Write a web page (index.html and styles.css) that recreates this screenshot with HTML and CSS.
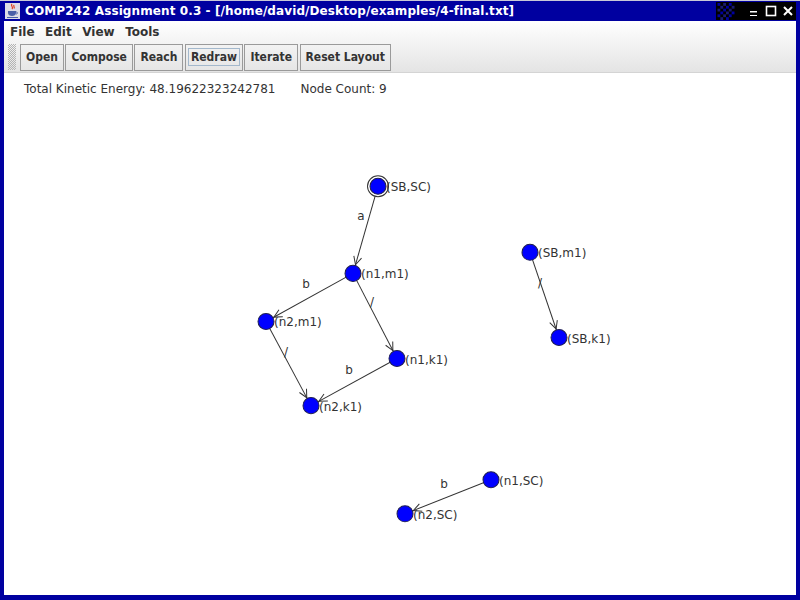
FILE: index.html
```html
<!DOCTYPE html>
<html>
<head>
<meta charset="utf-8">
<title>COMP242 Assignment 0.3</title>
<link rel="stylesheet" href="styles.css">
</head>
<body>
<div class="window">
  <div class="titlebar">
    <svg class="app-icon" width="15" height="16" viewBox="0 0 15 16">
      <rect x="0" y="0" width="15" height="16" fill="#dcdce6"/>
      <path d="M7 1 C5 3 9 4 7 6 M9 2 C8 3.5 10 4 9 5.5" stroke="#e03a1c" stroke-width="1.2" fill="none"/>
      <path d="M3 8 H11 V10 C11 12 9 13 7 13 C5 13 3 12 3 10 Z" fill="#4a5fa8"/>
      <path d="M11 9 C13 9 13 11 11 11" stroke="#4a5fa8" stroke-width="1" fill="none"/>
      <rect x="2" y="14" width="11" height="1" fill="#4a5fa8"/>
    </svg>
    <span class="title">COMP242 Assignment 0.3 - [/home/david/Desktop/examples/4-final.txt]</span>
    <div class="wm-buttons">
      <svg class="wm-pager" width="18" height="17" viewBox="0 0 6 6">
        <rect x="0" y="0" width="1" height="1" fill="#0000a0"/>
        <rect x="2" y="0" width="1" height="1" fill="#1a1a70"/>
        <rect x="4" y="0" width="1" height="1" fill="#0000a0"/>
        <rect x="1" y="1" width="1" height="1" fill="#1a1a70"/>
        <rect x="3" y="1" width="1" height="1" fill="#0000a0"/>
        <rect x="5" y="1" width="1" height="1" fill="#1a1a70"/>
        <rect x="0" y="2" width="1" height="1" fill="#1a1a70"/>
        <rect x="2" y="2" width="1" height="1" fill="#0000a0"/>
        <rect x="4" y="2" width="1" height="1" fill="#1a1a70"/>
        <rect x="1" y="3" width="1" height="1" fill="#0000a0"/>
        <rect x="3" y="3" width="1" height="1" fill="#1a1a70"/>
        <rect x="5" y="3" width="1" height="1" fill="#0000a0"/>
        <rect x="0" y="4" width="1" height="1" fill="#0000a0"/>
        <rect x="2" y="4" width="1" height="1" fill="#1a1a70"/>
        <rect x="4" y="4" width="1" height="1" fill="#0000a0"/>
        <rect x="1" y="5" width="1" height="1" fill="#1a1a70"/>
        <rect x="3" y="5" width="1" height="1" fill="#0000a0"/>
      </svg>
      <svg class="wm-btn" width="12" height="12" viewBox="0 0 12 12">
        <rect x="2" y="6" width="7" height="1.5" fill="#fff"/>
        <rect x="2" y="10" width="7" height="1" fill="#fff"/>
      </svg>
      <svg class="wm-btn" width="12" height="12" viewBox="0 0 12 12">
        <rect x="1.5" y="1.5" width="9" height="9" fill="none" stroke="#fff" stroke-width="1.6"/>
      </svg>
      <svg class="wm-btn" width="12" height="12" viewBox="0 0 12 12">
        <path d="M2 2 L10 10 M10 2 L2 10" stroke="#fff" stroke-width="2"/>
      </svg>
    </div>
  </div>

  <div class="chrome">
    <div class="menubar">
      <span class="menu">File</span>
      <span class="menu">Edit</span>
      <span class="menu">View</span>
      <span class="menu">Tools</span>
    </div>
    <div class="toolbar">
      <div class="grip"></div>
      <button class="tool">Open</button>
      <button class="tool">Compose</button>
      <button class="tool">Reach</button>
      <button class="tool focused"><span class="focus-ring">Redraw</span></button>
      <button class="tool">Iterate</button>
      <button class="tool">Reset Layout</button>
    </div>
  </div>

  <div class="canvas">
    <div class="stats">
      <span>Total Kinetic Energy: 48.19622323242781</span>
      <span>Node Count: 9</span>
    </div>
    <svg class="graph" viewBox="4 73 792 521" preserveAspectRatio="none">
      <defs>
        <marker id="arrow" markerUnits="userSpaceOnUse" markerWidth="40" markerHeight="40"
                refX="20" refY="20" orient="auto" viewBox="0 0 40 40">
          <path d="M3 16 L11 20 L3 24" fill="none" stroke="#333" stroke-width="1"/>
        </marker>
      </defs>

      <g class="edges">
        <line x1="378" y1="186" x2="353" y2="273" marker-end="url(#arrow)"/>
        <line x1="353" y1="273" x2="266" y2="321" marker-end="url(#arrow)"/>
        <line x1="353" y1="273" x2="397" y2="358" marker-end="url(#arrow)"/>
        <line x1="266" y1="321" x2="311" y2="405" marker-end="url(#arrow)"/>
        <line x1="397" y1="358" x2="311" y2="405" marker-end="url(#arrow)"/>
        <line x1="530" y1="252" x2="559" y2="337" marker-end="url(#arrow)"/>
        <line x1="491" y1="479" x2="405" y2="513" marker-end="url(#arrow)"/>
      </g>

      <g class="edge-labels">
        <text x="361" y="220">a</text>
        <text x="306" y="288">b</text>
        <text x="372" y="306">/</text>
        <text x="286" y="355">/</text>
        <text x="349" y="373">b</text>
        <text x="540" y="287">/</text>
        <text x="444" y="487">b</text>
      </g>

      <circle class="initial" cx="378" cy="186" r="10.5"/>

      <g class="nodes">
        <circle cx="378" cy="186" r="8"/>
        <circle cx="353" cy="273" r="8"/>
        <circle cx="266" cy="321" r="8"/>
        <circle cx="397" cy="358" r="8"/>
        <circle cx="311" cy="405" r="8"/>
        <circle cx="530" cy="252" r="8"/>
        <circle cx="559" cy="337" r="8"/>
        <circle cx="491" cy="479" r="8"/>
        <circle cx="405" cy="513" r="8"/>
      </g>

      <g class="node-labels">
        <text x="386" y="191">(SB,SC)</text>
        <text x="361" y="278">(n1,m1)</text>
        <text x="274" y="326">(n2,m1)</text>
        <text x="405" y="363">(n1,k1)</text>
        <text x="319" y="410">(n2,k1)</text>
        <text x="538" y="257">(SB,m1)</text>
        <text x="567" y="342">(SB,k1)</text>
        <text x="499" y="484">(n1,SC)</text>
        <text x="413" y="518">(n2,SC)</text>
      </g>
    </svg>
  </div>
</div>
</body>
</html>
```

FILE: styles.css
```css
html, body {
  margin: 0;
  padding: 0;
  background: #ffffff;
}

.window {
  width: 800px;
  height: 600px;
  box-sizing: border-box;
  display: flex;
  flex-direction: column;
  background: #0000a0;
  border-top: 1px solid #c8c8d8;
  padding: 0 4px 5px 4px;
  overflow: hidden;
}

/* window manager title bar */
.titlebar {
  height: 20px;
  display: flex;
  align-items: center;
  margin: 0 -4px;
  padding-left: 5px;
  background: #0000a0;
  color: #ffffff;
  font-family: "DejaVu Sans", sans-serif;
  font-weight: bold;
  font-size: 12px;
  flex: none;
}

.app-icon {
  flex: none;
  margin-right: 5px;
}

.title {
  white-space: nowrap;
  letter-spacing: 0.1px;
}

.wm-buttons {
  margin-left: auto;
  margin-right: 4px;
  height: 18px;
  display: flex;
  align-items: center;
  gap: 4px;
  background: #000000;
  padding: 0 2px 0 1px;
}

.wm-pager {
  margin-right: 8px;
}

.wm-btn {
  margin-left: 1px;
}

/* menu + toolbar share one vertical gradient */
.chrome {
  flex: none;
  background: linear-gradient(#ffffff, #e4e4e4);
  border-bottom: 1px solid #d4d4d4;
  font-family: "DejaVu Sans", sans-serif;
  font-weight: bold;
  font-size: 12px;
  color: #333333;
}

.menubar {
  height: 21px;
  display: flex;
  align-items: center;
  padding-left: 6px;
}

.menu {
  margin-right: 10.5px;
}

.toolbar {
  height: 30px;
  display: flex;
  align-items: center;
  padding-left: 4px;
  gap: 1.5px;
}

.grip {
  width: 8px;
  height: 26px;
  margin-right: 2.5px;
  background: repeating-conic-gradient(#b4b4b4 0 25%, transparent 0 50%) 0 0 / 2px 2px;
}

.tool {
  height: 27px;
  box-sizing: border-box;
  padding: 0 5px;
  margin: 0;
  border: 1px solid #9a9a9a;
  background: linear-gradient(#f2f2f2, #e6e6e6);
  font-family: "DejaVu Sans Condensed", "DejaVu Sans", sans-serif;
  font-stretch: condensed;
  font-weight: bold;
  font-size: 12px;
  color: #333333;
  display: flex;
  align-items: center;
}

.tool.focused {
  padding: 0 2px;
}

.focus-ring {
  border: 1px solid #a3b8cc;
  padding: 1px 2px;
}

/* drawing area */
.canvas {
  flex: 1;
  position: relative;
  background: #ffffff;
}

.stats {
  display: flex;
  gap: 25px;
  padding: 9px 0 0 20px;
  font-family: "DejaVu Sans", sans-serif;
  font-size: 12px;
  color: #333333;
}

.graph {
  position: absolute;
  left: 0;
  top: 0;
  width: 100%;
  height: 100%;
}

.edges line {
  stroke: #333333;
  stroke-width: 1;
}

.edge-labels text,
.node-labels text {
  font-family: "DejaVu Sans", sans-serif;
  font-size: 12px;
  fill: #333333;
}

.edge-labels text {
  text-anchor: middle;
}

.initial {
  fill: #ffffff;
  stroke: #333333;
  stroke-width: 1;
}

.nodes circle {
  fill: #0000ff;
  stroke: #202050;
  stroke-width: 1;
}
```
